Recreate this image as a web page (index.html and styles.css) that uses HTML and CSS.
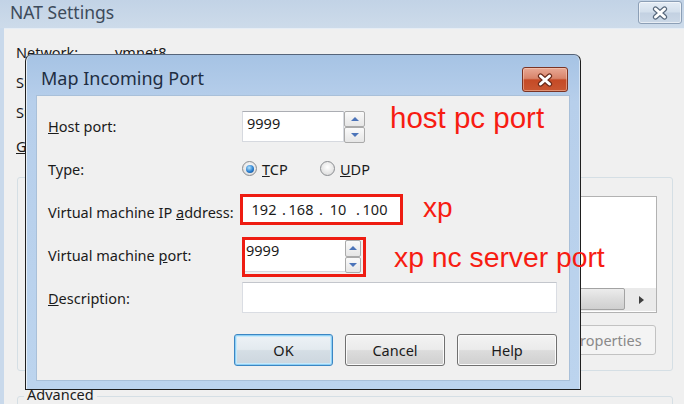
FILE: index.html
```html
<!DOCTYPE html>
<html lang="en">
<head>
<meta charset="utf-8">
<title>NAT Settings - Map Incoming Port</title>
<link rel="stylesheet" href="styles.css">
</head>
<body>
<div class="screen">
  <div class="nat">
    <div class="nat-title">
      <span class="nat-title-text">NAT Settings</span>
      <span class="nat-close">
        <svg width="18" height="14" viewBox="0 0 18 14"><path d="M4.5 3 L13.5 11 M13.5 3 L4.5 11" stroke="#56677b" stroke-width="5.2" stroke-linecap="round"/><path d="M4.5 3 L13.5 11 M13.5 3 L4.5 11" stroke="#fff" stroke-width="3" stroke-linecap="round"/></svg>
      </span>
    </div>
    <div class="nat-body">
      <div class="nat-row"><span class="k">Network:</span><span>vmnet8</span></div>
      <div class="nat-row"><span class="k">Subnet IP:</span></div>
      <div class="nat-row"><span class="k">Subnet mask:</span></div>
      <div class="nat-row gw"><span class="k"><u>G</u>ateway IP:</span></div>
      <div class="group">
        <div class="listbox">
          <div class="list-rows"></div>
          <div class="hscroll">
            <span class="hthumb"></span>
            <span class="harrow"></span>
          </div>
        </div>
        <div class="group-btns">
          <span class="gbtn">Properties</span>
        </div>
      </div>
      <div class="group adv">
        <span class="legend">Advanced</span>
      </div>
    </div>
  </div>

  <div class="dlg">
    <div class="dlg-title">
      <span class="dlg-title-text">Map Incoming Port</span>
      <span class="dlg-close">
        <svg width="18" height="14" viewBox="0 0 18 14"><path d="M4.5 3 L13.5 11 M13.5 3 L4.5 11" stroke="#6a2a1a" stroke-width="5.2" stroke-linecap="round"/><path d="M4.5 3 L13.5 11 M13.5 3 L4.5 11" stroke="#fff" stroke-width="3" stroke-linecap="round"/></svg>
      </span>
    </div>
    <div class="dlg-content">
      <div class="form">
        <span class="lbl"><u>H</u>ost port:</span>
        <div class="spin host">
          <span class="spin-input">9999</span>
          <span class="spin-btns"><span class="sb up"></span><span class="sb down"></span></span>
        </div>

        <span class="lbl">Type:</span>
        <div class="radios">
          <span class="radio tcp"><span class="rdot on"></span><span><u>T</u>CP</span></span>
          <span class="radio"><span class="rdot"></span><span><u>U</u>DP</span></span>
        </div>

        <span class="lbl">Virtual machine IP <u>a</u>ddress:</span>
        <div class="ip">
          <span class="oct">192</span><span class="dot">.</span><span class="oct">168</span><span class="dot">.</span><span class="oct">10</span><span class="dot">.</span><span class="oct">100</span>
        </div>

        <span class="lbl">Virtual machine <u>p</u>ort:</span>
        <div class="redbox">
          <span class="port-input">9999</span>
          <span class="spin-btns small"><span class="sb up"></span><span class="sb down"></span></span>
        </div>

        <span class="lbl"><u>D</u>escription:</span>
        <div class="desc"></div>
      </div>
      <div class="btns">
        <span class="btn def">OK</span>
        <span class="btn">Cancel</span>
        <span class="btn">Help</span>
      </div>
    </div>
  </div>

  <span class="note note1">host pc port</span>
  <span class="note note2">xp</span>
  <span class="note note3">xp nc server port</span>
</div>
</body>
</html>
```

FILE: styles.css
```css
* { box-sizing: border-box; }
html, body { margin: 0; padding: 0; }
body {
  width: 684px;
  height: 404px;
  overflow: hidden;
  background: #f0f0f0;
  font-family: "Noto Sans", "DejaVu Sans", sans-serif;
  font-size: 14.5px;
  color: #1b1b1b;
}
.screen { position: relative; width: 684px; height: 404px; overflow: hidden; }

/* background window */
.nat { height: 404px; background: #c9d9eb; display: flex; flex-direction: column; }
.nat-title {
  height: 28px; flex: none; display: flex; align-items: flex-start;
  padding-left: 10px;
  background: linear-gradient(#c2d3e6, #cddbea);
}
.nat-title-text { font-size: 17.5px; line-height: 24px; color: #3d4b5b; }
.nat-close {
  margin-left: auto; margin-right: 2px; margin-top: 1px;
  width: 44px; height: 23px;
  border: 1px solid #8c9fb6; border-radius: 3px;
  background: linear-gradient(#e4ecf5, #d3dfec 48%, #c3d1e2 52%, #cbd8e7);
  box-shadow: inset 0 0 0 1px rgba(255,255,255,.55);
  display: flex; align-items: center; justify-content: center;
}
.nat-body {
  flex: 1; margin-left: 4px; background: #f0f0f0;
  border-top: 1px solid #e6edf5;
  padding: 8px 11px 0 12px;
}
.nat-row { height: 30px; line-height: 30px; display: flex; white-space: nowrap; }
.nat-row .k { width: 99px; }
.nat-row.gw { margin-top: 4px; }

.group {
  position: relative;
  margin: 16px 0 0 1px;
  width: 656px; height: 194px;
  border: 1px solid #d5dfe5; border-radius: 3px;
  padding: 18px 15px 0 0;
  display: flex; flex-direction: column; align-items: flex-end;
}
.legend {
  position: absolute; left: 6px; top: -12px;
  padding: 0 3px; background: #f0f0f0; line-height: 18px; white-space: nowrap;
}
.group.adv { margin-top: 25px; height: 60px; }

.listbox {
  width: 600px; height: 117px;
  border: 1px solid #b2b2b2; background: #fff;
  display: flex; flex-direction: column;
}
.list-rows { flex: 1; }
.hscroll {
  height: 23px; margin-bottom: 1px; background: #eaeaea;
  display: flex; align-items: stretch;
}
.hthumb {
  flex: 1; margin: 0 1px 1px 0;
  border: 1px solid #a3a3a3; border-radius: 2px;
  background: linear-gradient(#ececec, #dcdcdc 50%, #cfcfcf);
}
.harrow { width: 30px; display: flex; align-items: center; justify-content: center; }
.harrow::after {
  content: ""; width: 0; height: 0;
  border-top: 4px solid transparent; border-bottom: 4px solid transparent;
  border-left: 5px solid #3f3f3f;
}
.group-btns { display: flex; gap: 10px; margin-top: 12px; margin-right: 1px; }
.gbtn {
  width: 99px; height: 30px; border: 1px solid #c2c2c2; border-radius: 3px;
  background: #f4f4f4; color: #8a8a8a;
  display: flex; align-items: center; justify-content: center;
}

/* dialog */
.dlg {
  position: absolute; left: 25px; top: 54px;
  width: 556px; height: 336px;
  border: 1px solid #1f1f1f; border-top-color: #56657a;
  border-radius: 7px 7px 0 0;
  background: linear-gradient(#a6c3e4, #b7cfeb 14%, #bcd4ee);
  box-shadow: inset 1px 0 0 #e8f0f8, inset -1px 0 0 #d6e4f3;
  padding: 0 10px 8px;
  display: flex; flex-direction: column;
}
.dlg-title { height: 40px; flex: none; display: flex; align-items: flex-start; }
.dlg-title-text { padding: 7px 0 0 5px; line-height: 33px; font-size: 18px; color: #1f2e42; }
.dlg-close {
  margin-left: auto; margin-right: 2px; margin-top: 12px;
  width: 46px; height: 25px;
  border: 1px solid #7b3424; border-radius: 3px;
  background: linear-gradient(#e9a995, #d8846a 45%, #c54a26 52%, #c95732);
  box-shadow: inset 0 0 0 1px rgba(255,220,200,.45);
  display: flex; align-items: center; justify-content: center;
}
.dlg-content {
  flex: 1; background: #f0f0f0;
  border: 1px solid #a9c0d9;
  padding: 8px 12px 0 11px;
}
.form {
  display: grid;
  grid-template-columns: 194px 1fr;
  grid-auto-rows: 43px;
  align-items: center;
}
.lbl { white-space: nowrap; }

.spin { display: flex; height: 32px; margin-top: 3px; }
.spin-input {
  width: 102px; height: 31px;
  border: 1px solid #d6d9df; border-top-color: #abadb3;
  background: #fff; padding: 1px 0 0 4px; line-height: 20px;
}
.spin-btns { width: 21px; display: flex; flex-direction: column; }
.sb {
  flex: 1; border: 1px solid #aaaaaa; border-radius: 2px;
  background: linear-gradient(#fafafa, #e6e6e6);
  display: flex; align-items: center; justify-content: center;
}
.sb.up::after {
  content: ""; width: 0; height: 0;
  border-left: 4px solid transparent; border-right: 4px solid transparent;
  border-bottom: 4px solid #4c74b9;
}
.sb.down::after {
  content: ""; width: 0; height: 0;
  border-left: 4px solid transparent; border-right: 4px solid transparent;
  border-top: 4px solid #4c74b9;
}

.radios { display: flex; align-items: center; }
.radio { display: inline-flex; align-items: center; gap: 5px; }
.radio.tcp { width: 78px; }
.rdot {
  width: 15px; height: 15px; border-radius: 50%;
  border: 1px solid #8a8d91;
  background: radial-gradient(circle at 50% 40%, #ffffff, #e1e1e1 70%, #cfcfcf);
  display: flex; align-items: center; justify-content: center;
}
.rdot.on::after {
  content: ""; width: 8px; height: 8px; border-radius: 50%;
  background: radial-gradient(circle at 40% 35%, #b6e6ff, #2a7fcf 55%, #0d3f80);
}

.ip {
  margin-left: -2px; margin-bottom: 4px;
  width: 163px; height: 31px;
  border: 3px solid #ee1c12; background: #fff;
  display: flex; padding-left: 6px; line-height: 25px;
}
.oct { width: 30px; text-align: center; }
.dot { width: 7px; text-align: right; }

.redbox {
  margin-top: 5px;
  width: 124px; height: 40px;
  border: 3px solid #ee1c12;
  display: flex; align-items: flex-start;
}
.port-input {
  width: 100px; height: 32px; background: #fff;
  border-bottom: 1px solid #d6d9df;
  padding-left: 1px; line-height: 20px;
}
.spin-btns.small { width: 16px; height: 33px; }

.desc {
  width: 315px; height: 31px;
  border: 1px solid #dadde3; border-top-color: #c3c6cc; background: #fff;
}

.btns { display: flex; justify-content: flex-end; gap: 12px; margin-top: 15px; }
.btn {
  width: 100px; height: 32px;
  border: 1px solid #707070; border-radius: 3px;
  background: linear-gradient(#f3f3f3, #ebebeb 48%, #dcdcdc 52%, #cfcfcf);
  box-shadow: inset 0 0 0 1px #fbfbfb;
  display: flex; align-items: center; justify-content: center;
}
.btn.def {
  width: 99px;
  border-color: #3c86c3;
  background: linear-gradient(#edf2f6, #e3eaef 48%, #d5dee5 52%, #ccd6de);
  box-shadow: inset 0 0 0 1px #8fd0f5, inset 0 0 0 2px #c8e9fb;
}

/* red annotations */
.note {
  position: absolute;
  font-family: "Liberation Sans", Arial, sans-serif;
  color: #f71c12; line-height: 1; white-space: nowrap;
}
.note1 { left: 390px; top: 103px; font-size: 29.5px; }
.note2 { left: 423px; top: 194px; font-size: 28px; }
.note3 { left: 394px; top: 243px; font-size: 28.3px; }
```
